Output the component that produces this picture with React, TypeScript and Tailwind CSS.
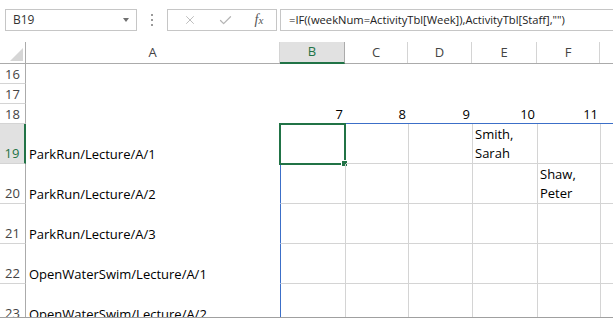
import { X, Check } from 'lucide-react';

const font = "font-['Open_Sans',sans-serif]";

// column letters B..F plus the cut-off G, widths include the right gridline
const cols = [
  { key: 'B', w: 'w-[65px]' },
  { key: 'C', w: 'w-[63px]' },
  { key: 'D', w: 'w-[64px]' },
  { key: 'E', w: 'w-[65px]' },
  { key: 'F', w: 'w-[63px]' },
];

type Row = {
  n: number;
  tall: boolean;
  a?: string;
  vals?: string[];
  grid: boolean;
};

const rows: Row[] = [
  { n: 16, tall: false, grid: false },
  { n: 17, tall: false, grid: false },
  { n: 18, tall: false, grid: false, vals: ['7', '8', '9', '10', '11'] },
  { n: 19, tall: true, grid: true, a: 'ParkRun/Lecture/A/1', vals: ['', '', '', 'Smith,\nSarah', ''] },
  { n: 20, tall: true, grid: true, a: 'ParkRun/Lecture/A/2', vals: ['', '', '', '', 'Shaw,\nPeter'] },
  { n: 21, tall: true, grid: true, a: 'ParkRun/Lecture/A/3' },
  { n: 22, tall: true, grid: true, a: 'OpenWaterSwim/Lecture/A/1' },
  { n: 23, tall: true, grid: true, a: 'OpenWaterSwim/Lecture/A/2' },
];

function FormulaBar() {
  return (
    <div className="h-[42px] flex items-start pt-[9px] bg-white">
      {/* Name box */}
      <div className="ml-[5px] w-[132px] h-[22px] border border-[#c6c6c6] flex items-center justify-between pl-[7px] pr-[7px]">
        <span className={`${font} text-[12px] text-[#333]`}>B19</span>
        <span className="w-0 h-0 border-l-[3px] border-r-[3px] border-t-[4px] border-l-transparent border-r-transparent border-t-[#707070]" />
      </div>
      {/* grip dots */}
      <div className="w-[30px] h-[22px] flex flex-col items-center justify-center gap-[3px]">
        <span className="w-[2px] h-[2px] bg-[#9a9a9a]" />
        <span className="w-[2px] h-[2px] bg-[#9a9a9a]" />
        <span className="w-[2px] h-[2px] bg-[#9a9a9a]" />
      </div>
      {/* cancel / enter / insert function */}
      <div className="w-[110px] h-[22px] border border-[#c6c6c6] flex items-center">
        <div className="w-[40px] flex justify-center pl-[4px]">
          <X size={14} strokeWidth={1.5} className="text-[#b5b5b5]" />
        </div>
        <div className="w-[34px] flex justify-center">
          <Check size={15} strokeWidth={2} className="text-[#b5b5b5]" />
        </div>
        <div className="flex-1 flex justify-center">
          <span className="font-['Liberation_Serif',serif] italic text-[14px] text-[#555] leading-none">
            f<span className="text-[11px]">x</span>
          </span>
        </div>
      </div>
      {/* formula input */}
      <div className="ml-[3px] flex-1 h-[22px] border-y border-l border-[#c6c6c6] flex items-center pl-[8px] overflow-hidden whitespace-nowrap">
        <span className={`${font} text-[11.2px] text-[#222]`}>
          =IF((weekNum=ActivityTbl[Week]),ActivityTbl[Staff],"")
        </span>
      </div>
    </div>
  );
}

function ColumnHeaders() {
  return (
    <div className={`h-[22px] flex border-b border-[#ababab] ${font} text-[13px] text-[#444]`}>
      {/* select-all corner */}
      <div className="w-[26px] border-r border-[#ababab] flex items-end justify-end pr-[2px] pb-[2px]">
        <svg width="13" height="13" viewBox="0 0 13 13" className="block">
          <polygon points="13,0 13,13 0,13" fill="#d6d6d6" />
        </svg>
      </div>
      <div className="w-[254px] border-r border-[#d4d4d4] flex items-center justify-center">A</div>
      {cols.map((c) =>
        c.key === 'B' ? (
          <div
            key={c.key}
            className={`${c.w} bg-[#e1e1e1] border-r border-[#ababab] border-b-2 border-b-[#217346] -mb-px flex items-center justify-center text-[#217346]`}
          >
            {c.key}
          </div>
        ) : (
          <div key={c.key} className={`${c.w} border-r border-[#d4d4d4] flex items-center justify-center`}>
            {c.key}
          </div>
        )
      )}
      <div className="flex-1" />
    </div>
  );
}

function SheetRow({ row }: { row: Row }) {
  const h = row.tall ? 'h-[40px]' : 'h-[20px]';
  const selected = row.n === 19;
  const bottom = row.n === 18 ? 'border-b border-b-[#3c6fc8]' : row.grid ? 'border-b border-b-[#d4d4d4]' : 'border-b border-b-white';

  return (
    <div className={`flex ${h} ${font} text-[13px]`}>
      {/* row number */}
      <div
        className={`w-[26px] shrink-0 flex items-end justify-center border-b border-b-[#d4d4d4] ${row.tall ? 'pb-[1px]' : ''} ${
          selected ? 'bg-[#e1e1e1] text-[#217346] border-r-2 border-r-[#217346]' : 'text-[#444] border-r border-r-[#ababab]'
        }`}
      >
        <span className="leading-[18px]">{row.n}</span>
      </div>
      {/* column A, no gridlines */}
      <div
        className={`w-[255px] shrink-0 flex items-end pl-[3px] border-b border-b-white ${
          row.grid ? 'border-r border-r-[#3c6fc8]' : ''
        }`}
      >
        <span className="leading-[18px] text-black whitespace-nowrap">{row.a}</span>
      </div>
      {cols.map((c, i) => {
        const v = row.vals?.[i] ?? '';
        const numeric = row.n === 18;
        return (
          <div
            key={c.key}
            className={`${c.w} shrink-0 relative flex items-end ${bottom} ${
              row.grid ? 'border-r border-r-[#d4d4d4]' : ''
            } ${numeric ? 'justify-end pr-[3px]' : 'pl-[2px]'}`}
          >
            <span className={`whitespace-pre text-black ${numeric ? 'leading-[18px]' : 'leading-[19px]'}`}>{v}</span>
            {selected && i === 0 && (
              <div className="absolute -left-[2px] -top-[1px] w-[67px] h-[42px] border-2 border-[#217346]">
                <span className="absolute -right-[4px] -bottom-[4px] w-[7px] h-[7px] bg-[#217346] border border-white" />
              </div>
            )}
          </div>
        );
      })}
      <div className={`flex-1 ${bottom}`} />
    </div>
  );
}

export default function App() {
  return (
    <div className="w-[613px] h-[318px] overflow-hidden bg-white relative border-b border-[#a0a0a0]">
      {/* window top edge */}
      <div className="h-[3px] bg-gradient-to-b from-[#c8c8c8] to-white -mb-[3px]" />
      <FormulaBar />
      <ColumnHeaders />
      {rows.map((r) => (
        <SheetRow key={r.n} row={r} />
      ))}
    </div>
  );
}
